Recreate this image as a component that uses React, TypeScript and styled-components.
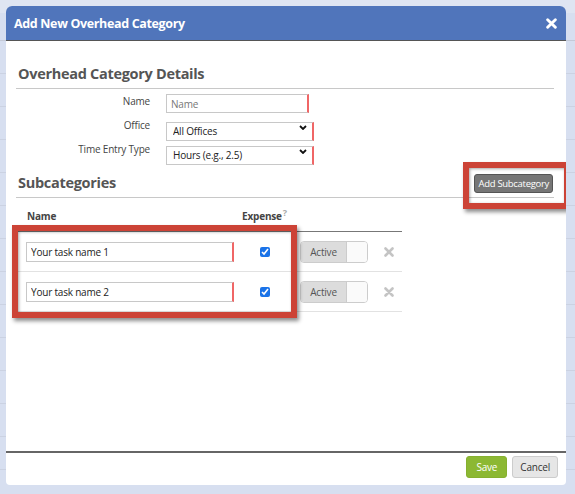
import React from 'react';
import styled, { createGlobalStyle } from 'styled-components';

const GlobalStyle = createGlobalStyle`
  html, body {
    margin: 0;
    padding: 0;
    background: #d7dff0;
    font-family: "Open Sans", "Liberation Sans", sans-serif;
  }
`;

const Page = styled.div`
  position: relative;
  width: 575px;
  height: 494px;
  overflow: hidden;
  background: #d7dff0;
`;

const PageTop = styled.div`
  height: 40px;
  border-bottom: 1px solid #c4cad8;
  background: linear-gradient(#dfe5f2 0 13px, #d7dff0 13px);
`;

const PageRow = styled.div`
  height: 33px;
  border-bottom: 1px solid #cbd2e2;
  box-sizing: border-box;
`;

const Modal = styled.div`
  position: absolute;
  left: 6px;
  top: 6px;
  width: 560px;
  height: 479px;
  background: #fff;
  border-radius: 6px 6px 4px 4px;
  display: flex;
  flex-direction: column;
  overflow: hidden;
  letter-spacing: -0.2px;
`;

const Header = styled.div`
  height: 34px;
  flex: none;
  background: #5075bb;
  border-bottom: 1px solid #555;
  display: flex;
  align-items: center;
  justify-content: space-between;
  padding: 0 9px 0 8px;
  color: #fff;
`;

const Title = styled.h1`
  margin: 0;
  font-size: 12.5px;
  font-weight: 700;
  letter-spacing: -0.35px;
`;

const Body = styled.div`
  flex: 1;
  padding: 22px 12px 0 10px;
  position: relative;
`;

const SectionTitle = styled.div`
  display: flex;
  align-items: flex-end;
  justify-content: space-between;
  border-bottom: 1px solid #c8c8c8;
  padding: 0 0 3px 2px;
  height: 22px;
  h2 {
    margin: 0;
    font-size: 14.5px;
    font-weight: 700;
    color: #555;
    line-height: 22px;
    letter-spacing: -0.3px;
  }
`;

const Form = styled.div`
  display: grid;
  grid-template-columns: 134px auto;
  grid-auto-rows: 19px;
  column-gap: 16px;
  row-gap: 5px;
  padding-top: 5px;
  margin-bottom: 11px;
`;

const Label = styled.label`
  font-size: 10px;
  color: #444;
  text-align: right;
  line-height: 12px;
  padding-top: 1px;
`;

const TextInput = styled.input<{ $width: number }>`
  width: ${(p) => p.$width}px;
  height: ${(p) => (p.$width > 150 ? 20 : 19)}px;
  box-sizing: border-box;
  border: 1px solid #c8c8c8;
  border-right: 2px solid #f06666;
  padding: 0 4px;
  font-family: inherit;
  font-size: 10px;
  letter-spacing: -0.2px;
  color: #222;
  outline: none;
  &::placeholder {
    color: #777;
  }
`;

const SelectWrap = styled.div`
  position: relative;
  width: 148px;
  height: 19px;
  svg {
    position: absolute;
    right: 7px;
    top: 7px;
    pointer-events: none;
  }
`;

const Select = styled.select`
  appearance: none;
  width: 100%;
  height: 100%;
  box-sizing: border-box;
  border: 1px solid #c8c8c8;
  border-right: 2px solid #f06666;
  border-radius: 0;
  background: #fff;
  padding: 0 6px;
  font-family: inherit;
  font-size: 10px;
  letter-spacing: -0.2px;
  color: #222;
`;

const GrayButton = styled.button`
  font-family: inherit;
  font-size: 9.5px;
  letter-spacing: -0.3px;
  color: #fff;
  background: #767676;
  border: 1px solid #555;
  border-radius: 3px;
  height: 19px;
  padding: 0 3px;
  margin-bottom: 1px;
  margin-right: 1px;
`;

const Table = styled.div`
  width: 386px;
  margin-top: 6px;
`;

const Row = styled.div<{ $head?: boolean }>`
  display: grid;
  grid-template-columns: 220px 57px 82px 27px;
  align-items: center;
  height: ${(p) => (p.$head ? 28 : 40)}px;
  box-sizing: border-box;
  border-bottom: 1px solid ${(p) => (p.$head ? '#777' : '#e2e2e2')};
`;

const HeadCell = styled.div<{ $center?: boolean }>`
  font-size: 10px;
  font-weight: 700;
  color: #444;
  padding-left: ${(p) => (p.$center ? 0 : 11)}px;
  text-align: ${(p) => (p.$center ? 'center' : 'left')};
  align-self: end;
  padding-bottom: 8px;
  sup {
    color: #aaa;
    font-size: 9px;
    margin-left: 1px;
  }
`;

const Cell = styled.div<{ $center?: boolean; $pad?: number }>`
  display: flex;
  justify-content: ${(p) => (p.$center ? 'center' : 'flex-start')};
  padding-left: ${(p) => p.$pad ?? 0}px;
`;

const Check = styled.input`
  width: 10px;
  height: 10px;
  margin: 0;
  accent-color: #1a73e8;
`;

const Toggle = styled.div`
  display: flex;
  width: 68px;
  height: 22px;
  box-sizing: border-box;
  border: 1px solid #ccc;
  border-radius: 4px;
  overflow: hidden;
  span {
    flex: 1;
    background: #dcdcdc;
    color: #555;
    font-size: 10px;
    display: flex;
    align-items: center;
    justify-content: center;
  }
  i {
    width: 20px;
    background: #fafafa;
    border-left: 1px solid #ccc;
  }
`;

const Callout = styled.div<{ $x: number; $y: number; $w: number; $h: number }>`
  position: absolute;
  left: ${(p) => p.$x}px;
  top: ${(p) => p.$y}px;
  width: ${(p) => p.$w}px;
  height: ${(p) => p.$h}px;
  box-sizing: border-box;
  border: 6px solid #cc4336;
  box-shadow: 2px 3px 4px rgba(0, 0, 0, 0.45), inset 1px 1px 3px rgba(0, 0, 0, 0.35);
  pointer-events: none;
`;

const Footer = styled.div`
  flex: none;
  height: 29px;
  border-top: 2px solid #666;
  display: flex;
  justify-content: flex-end;
  align-items: flex-start;
  gap: 5px;
  padding: 3px 8px 0 0;
`;

const FooterButton = styled.button<{ $primary?: boolean }>`
  height: 22px;
  font-family: inherit;
  font-size: 10px;
  letter-spacing: -0.2px;
  border-radius: 3px;
  padding: 0 ${(p) => (p.$primary ? 9 : 7)}px;
  color: ${(p) => (p.$primary ? '#fff' : '#333')};
  background: ${(p) => (p.$primary ? '#8cb833' : '#e6e6e6')};
  border: 1px solid ${(p) => (p.$primary ? '#86b02f' : '#ccc')};
`;

function Times({ size, color }: { size: number; color: string }) {
  return (
    <svg width={size} height={size} viewBox="0 0 10 10">
      <path d="M1.5 1.5 L8.5 8.5 M8.5 1.5 L1.5 8.5" stroke={color} strokeWidth="2.6" strokeLinecap="round" />
    </svg>
  );
}

function Chevron() {
  return (
    <svg width="8" height="5" viewBox="0 0 8 5">
      <path d="M1 1 L4 4 L7 1" stroke="#111" strokeWidth="1.8" fill="none" />
    </svg>
  );
}

const tasks = ['Your task name 1', 'Your task name 2'];

export default function App() {
  return (
    <Page>
      <GlobalStyle />
      <PageTop />
      {Array.from({ length: 14 }).map((_, i) => (
        <PageRow key={i} />
      ))}
      <Modal>
        <Header>
          <Title>Add New Overhead Category</Title>
          <Times size={11} color="#fff" />
        </Header>
        <Body>
          <SectionTitle>
            <h2>Overhead Category Details</h2>
          </SectionTitle>
          <Form>
            <Label>Name</Label>
            <TextInput $width={143} placeholder="Name" />
            <Label>Office</Label>
            <SelectWrap>
              <Select defaultValue="all">
                <option value="all">All Offices</option>
              </Select>
              <Chevron />
            </SelectWrap>
            <Label>Time Entry Type</Label>
            <SelectWrap>
              <Select defaultValue="hours">
                <option value="hours">Hours (e.g., 2.5)</option>
              </Select>
              <Chevron />
            </SelectWrap>
          </Form>
          <SectionTitle>
            <h2>Subcategories</h2>
            <GrayButton>Add Subcategory</GrayButton>
          </SectionTitle>
          <Table>
            <Row $head>
              <HeadCell>Name</HeadCell>
              <HeadCell $center>
                Expense<sup>?</sup>
              </HeadCell>
              <div />
              <div />
            </Row>
            {tasks.map((t) => (
              <Row key={t}>
                <Cell $pad={10}>
                  <TextInput $width={208} defaultValue={t} />
                </Cell>
                <Cell $center>
                  <Check type="checkbox" defaultChecked />
                </Cell>
                <Cell $pad={7}>
                  <Toggle>
                    <span>Active</span>
                    <i />
                  </Toggle>
                </Cell>
                <Cell $pad={9}>
                  <Times size={10} color="#c4c4c4" />
                </Cell>
              </Row>
            ))}
          </Table>
          <Callout $x={457} $y={121} $w={107} $h={47} />
          <Callout $x={6} $y={184} $w={285} $h={93} />
        </Body>
        <Footer>
          <FooterButton $primary>Save</FooterButton>
          <FooterButton>Cancel</FooterButton>
        </Footer>
      </Modal>
    </Page>
  );
}
